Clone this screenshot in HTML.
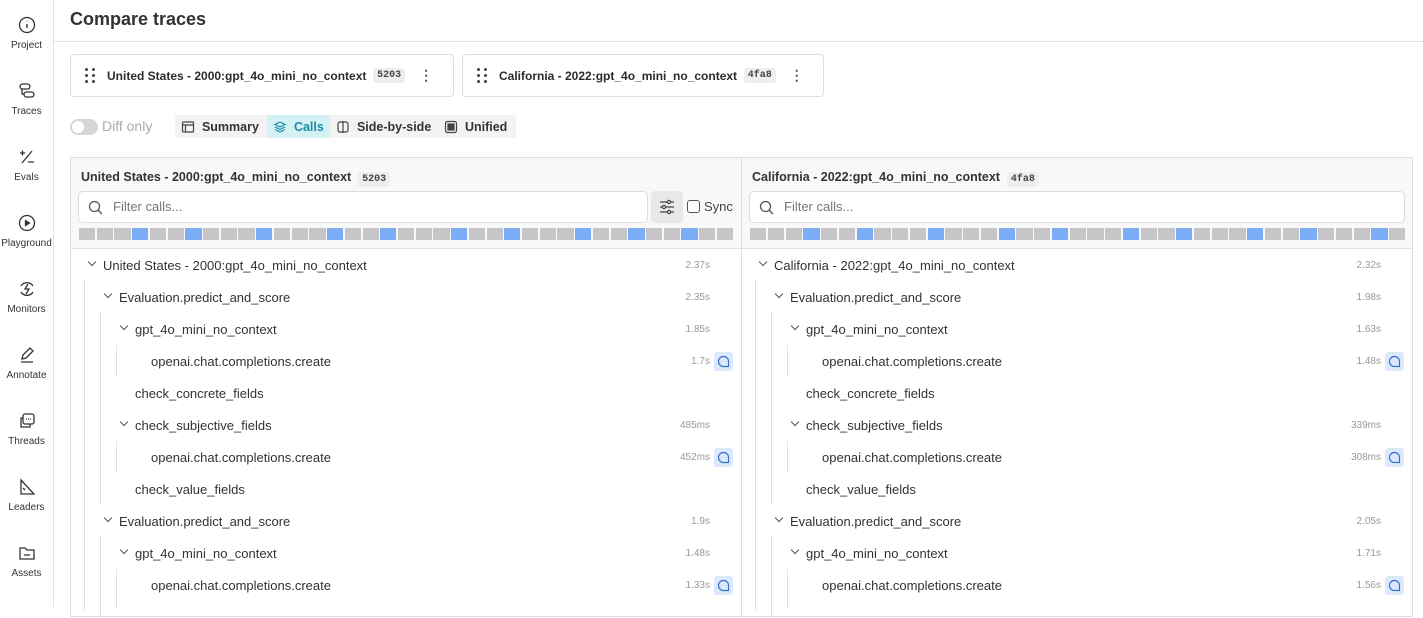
<!DOCTYPE html><html><head><style>
*{box-sizing:border-box;margin:0;padding:0}
body{width:1423px;height:607px;overflow:hidden;background:#fff;font-family:"Liberation Sans",sans-serif;color:#2b2b2b;position:relative}
.a{position:absolute}
.side{left:0;top:0;width:54px;height:607px;border-right:1px solid #e2e2e2}
.ni{position:absolute;left:0;width:53px;text-align:center;font-size:10px;color:#333}
.ni svg{display:block;margin:0 auto 6px}
.badge{display:inline-block;background:#eee;border-radius:3px;font-family:"Liberation Mono",monospace;font-size:10px;font-weight:bold;padding:2px 4px;color:#444}
.card{top:54px;height:43px;border:1px solid #ddd;border-radius:4px;font-size:12px;font-weight:bold;display:flex;align-items:center;padding-left:14px;color:#2b2b2b;white-space:nowrap}
.dots{display:inline-grid;grid-template-columns:3px 3px;gap:3px 4px;margin-right:12px}
.dots i{width:3px;height:3px;background:#444;border-radius:50%}
.tab{top:115px;height:23px;font-size:12.5px;font-weight:bold;display:flex;align-items:center;padding:0 6px;background:#f3f3f3;color:#333;white-space:nowrap}
.row{position:absolute;font-size:13px;color:#333;height:20px;line-height:20px;white-space:nowrap}
.dur{position:absolute;font-size:10px;color:#999;text-align:right;width:60px;height:20px;line-height:20px}
.ic{position:absolute;width:19px;height:19px;background:#dbe9fb;border-radius:3px}
.gl{position:absolute;width:1px;background:#e3e3e3}
.chev{position:absolute;width:6px;height:6px;border-right:1.3px solid #555;border-bottom:1.3px solid #555;transform:rotate(45deg)}
.bar{position:absolute;top:228px;height:12px;display:flex;gap:1.5px}
.bar i{flex:1;background:#c6c6c8}
.bar i.b{background:#7aadf5}
.filter{position:absolute;top:191px;height:32px;border:1px solid #ddd;border-radius:5px;background:#fff;font-size:13px;color:#777;padding-left:34px;line-height:30px}
</style></head><body>
<div class="a side">
 <div class="ni" style="top:16px"><svg width="18" height="18" viewBox="0 0 18 18"><circle cx="9" cy="9" r="7.5" fill="none" stroke="#333" stroke-width="1.3"/><path d="M9 8v4M9 5.6v.4" stroke="#333" stroke-width="1.4"/></svg>Project</div>
 <div class="ni" style="top:82px"><svg width="18" height="18" viewBox="0 0 18 18" fill="none" stroke="#333" stroke-width="1.3"><rect x="2" y="2" width="10" height="5" rx="2.5"/><rect x="6" y="10" width="10" height="5" rx="2.5"/><path d="M4 7v5h2"/></svg>Traces</div>
 <div class="ni" style="top:148px"><svg width="18" height="18" viewBox="0 0 18 18" fill="none" stroke="#333" stroke-width="1.3"><path d="M2 5h5M4.5 2.5v5M14 3L4 15M10 14h6"/></svg>Evals</div>
 <div class="ni" style="top:214px"><svg width="18" height="18" viewBox="0 0 18 18" fill="none" stroke="#333" stroke-width="1.3"><circle cx="9" cy="9" r="7.5"/><path d="M7.5 6.5v5l4-2.5z" fill="#333"/></svg>Playground</div>
 <div class="ni" style="top:280px"><svg width="18" height="18" viewBox="0 0 18 18" fill="none" stroke="#333" stroke-width="1.3"><path d="M3 6a7 7 0 0 1 12 0M15 12a7 7 0 0 1-12 0"/><path d="M10 4l-3 5h4l-3 5"/></svg>Monitors</div>
 <div class="ni" style="top:346px"><svg width="18" height="18" viewBox="0 0 18 18" fill="none" stroke="#333" stroke-width="1.3"><path d="M4 13l1-4 7-7 3 3-7 7zM3 16h12"/></svg>Annotate</div>
 <div class="ni" style="top:412px"><svg width="18" height="18" viewBox="0 0 18 18" fill="none" stroke="#333" stroke-width="1.3"><rect x="5" y="2" width="11" height="10" rx="2"/><path d="M5 6H3v9h9v-3"/><path d="M8 7h1M10 7h1M12 7h1"/></svg>Threads</div>
 <div class="ni" style="top:478px"><svg width="18" height="18" viewBox="0 0 18 18" fill="none" stroke="#333" stroke-width="1.3"><path d="M3 2v14h13z"/><path d="M5 10l2 2"/></svg>Leaders</div>
 <div class="ni" style="top:544px"><svg width="18" height="18" viewBox="0 0 18 18" fill="none" stroke="#333" stroke-width="1.3"><path d="M2 4h5l2 2h7v9H2z"/><path d="M6 11h6"/></svg>Assets</div>
</div>
<div class="a" style="left:70px;top:9px;font-size:18px;font-weight:bold;color:#333">Compare traces</div>
<div class="a" style="left:54px;top:41px;width:1369px;height:1px;background:#e2e2e2"></div>

<div class="a card" style="left:70px;width:384px"><span class="dots"><i></i><i></i><i></i><i></i><i></i><i></i></span>United States - 2000:gpt_4o_mini_no_context&nbsp;&nbsp;<span class="badge">5203</span><span style="margin-left:14px;font-size:14px;color:#555">⋮</span></div>
<div class="a card" style="left:462px;width:362px"><span class="dots"><i></i><i></i><i></i><i></i><i></i><i></i></span>California - 2022:gpt_4o_mini_no_context&nbsp;&nbsp;<span class="badge">4fa8</span><span style="margin-left:14px;font-size:14px;color:#555">⋮</span></div>

<div class="a" style="left:70px;top:119px;width:28px;height:16px;border-radius:8px;background:#d6d6d6"><div style="position:absolute;left:2px;top:2px;width:12px;height:12px;border-radius:50%;background:#fff"></div></div>
<div class="a" style="left:102px;top:118px;font-size:14px;color:#aaa">Diff only</div>
<div class="a tab" style="left:175px;width:92px"><svg width="14" height="14" viewBox="0 0 14 14" fill="none" stroke="#444" stroke-width="1.2"><rect x="1.5" y="2" width="11" height="10" rx="1"/><path d="M1.5 5h11M4.5 5v7"/></svg>&nbsp;&nbsp;Summary</div>
<div class="a tab" style="left:267px;width:63px;background:#d4f2f6;color:#1a8ea0"><svg width="14" height="14" viewBox="0 0 14 14" fill="none" stroke="#1a8ea0" stroke-width="1.2"><path d="M7 2l5 2.5-5 2.5-5-2.5zM2 7l5 2.5L12 7M2 9.5L7 12l5-2.5"/></svg>&nbsp;&nbsp;Calls</div>
<div class="a tab" style="left:330px;width:108px"><svg width="14" height="14" viewBox="0 0 14 14" fill="none" stroke="#444" stroke-width="1.2"><rect x="2" y="2" width="10" height="10" rx="2"/><path d="M7 1v12"/></svg>&nbsp;&nbsp;Side-by-side</div>
<div class="a tab" style="left:438px;width:78px"><svg width="14" height="14" viewBox="0 0 14 14" fill="none" stroke="#444" stroke-width="1.2"><rect x="1.5" y="1.5" width="11" height="11" rx="2"/><rect x="4" y="4" width="6" height="6" fill="#444"/></svg>&nbsp;&nbsp;Unified</div>

<div class="a" style="left:70px;top:157px;width:1343px;height:460px;border:1px solid #ddd"></div>
<div class="a" style="left:71px;top:158px;width:1341px;height:91px;background:#f8f8f8;border-bottom:1px solid #e2e2e2"></div>
<div class="a" style="left:741px;top:158px;width:1px;height:460px;background:#ddd"></div>

<div class="a" style="left:81px;top:170px;font-size:12.5px;font-weight:bold;color:#333;white-space:nowrap">United States - 2000:gpt_4o_mini_no_context&nbsp;&nbsp;<span class="badge">5203</span></div>
<div class="a" style="left:752px;top:170px;font-size:12.5px;font-weight:bold;color:#333;white-space:nowrap">California - 2022:gpt_4o_mini_no_context&nbsp;&nbsp;<span class="badge">4fa8</span></div>

<div class="filter" style="left:78px;width:570px">Filter calls...</div>
<svg class="a" style="left:88px;top:200px" width="15" height="15" viewBox="0 0 15 15" fill="none" stroke="#555" stroke-width="1.3"><circle cx="6.5" cy="6.5" r="5"/><path d="M10 10l4 4"/></svg>
<div class="a" style="left:651px;top:191px;width:32px;height:32px;background:#e8e8e8;border-radius:4px"></div>
<svg class="a" style="left:658px;top:199px" width="18" height="16" viewBox="0 0 18 16" fill="none" stroke="#444" stroke-width="1.2"><path d="M2 3h14M2 8h14M2 13h14"/><circle cx="11" cy="3" r="1.6" fill="#e8e8e8"/><circle cx="6" cy="8" r="1.6" fill="#e8e8e8"/><circle cx="11" cy="13" r="1.6" fill="#e8e8e8"/></svg>
<div class="a" style="left:687px;top:200px;width:13px;height:13px;border:1px solid #555;border-radius:3px;background:#fff"></div>
<div class="a" style="left:704px;top:199px;font-size:13px;color:#444">Sync</div>

<div class="filter" style="left:749px;width:656px">Filter calls...</div>
<svg class="a" style="left:759px;top:200px" width="15" height="15" viewBox="0 0 15 15" fill="none" stroke="#555" stroke-width="1.3"><circle cx="6.5" cy="6.5" r="5"/><path d="M10 10l4 4"/></svg>

<div class="bar" style="left:79px;width:654px"><i></i><i></i><i></i><i class="b"></i><i></i><i></i><i class="b"></i><i></i><i></i><i></i><i class="b"></i><i></i><i></i><i></i><i class="b"></i><i></i><i></i><i class="b"></i><i></i><i></i><i></i><i class="b"></i><i></i><i></i><i class="b"></i><i></i><i></i><i></i><i class="b"></i><i></i><i></i><i class="b"></i><i></i><i></i><i class="b"></i><i></i><i></i></div>
<div class="bar" style="left:750px;width:655px"><i></i><i></i><i></i><i class="b"></i><i></i><i></i><i class="b"></i><i></i><i></i><i></i><i class="b"></i><i></i><i></i><i></i><i class="b"></i><i></i><i></i><i class="b"></i><i></i><i></i><i></i><i class="b"></i><i></i><i></i><i class="b"></i><i></i><i></i><i></i><i class="b"></i><i></i><i></i><i class="b"></i><i></i><i></i><i></i><i class="b"></i><i></i></div>

<div class="gl" style="left:84px;top:280px;height:330px"></div>
<div class="gl" style="left:100px;top:312px;height:192px"></div>
<div class="gl" style="left:116px;top:345px;height:32px"></div>
<div class="gl" style="left:116px;top:441px;height:32px"></div>
<div class="gl" style="left:100px;top:536px;height:80px"></div>
<div class="gl" style="left:116px;top:569px;height:40px"></div>
<div id="L"></div>
<div id="R"></div>
<script>
function build(off,durs){
 var rows=[[0,"United States - 2000:gpt_4o_mini_no_context",1,0],[1,"Evaluation.predict_and_score",1,0],[2,"gpt_4o_mini_no_context",1,0],[3,"openai.chat.completions.create",0,1],[2,"check_concrete_fields",0,0],[2,"check_subjective_fields",1,0],[3,"openai.chat.completions.create",0,1],[2,"check_value_fields",0,0],[1,"Evaluation.predict_and_score",1,0],[2,"gpt_4o_mini_no_context",1,0],[3,"openai.chat.completions.create",0,1]];
 if(off>0)rows[0][1]="California - 2022:gpt_4o_mini_no_context";
 var h="";
 rows.forEach(function(r,i){
  var y=265+32*i, x=off+103+16*r[0];
  if(r[2])h+='<div class="chev" style="left:'+(x-14)+'px;top:'+(y-6)+'px"></div>';
  h+='<div class="row" style="left:'+x+'px;top:'+(y-9)+'px">'+r[1]+'</div>';
  if(durs[i])h+='<div class="dur" style="left:'+(off+650)+'px;top:'+(y-9)+'px">'+durs[i]+'</div>';
  if(r[3])h+='<div class="ic" style="left:'+(off+714)+'px;top:'+(y-9)+'px"><svg width="19" height="19" viewBox="0 0 19 19" fill="none" stroke="#3a6fd0" stroke-width="1.2"><path d="M14.5 14.5V9.5a5 5 0 1 0-5 5z"/><path d="M7 9.5h.1M9.5 9.5h.1M12 9.5h.1" stroke-width="1.4"/></svg></div>';
 });
 return h;
}
document.getElementById("L").innerHTML=build(0,["2.37s","2.35s","1.85s","1.7s","","485ms","452ms","","1.9s","1.48s","1.33s"]);
document.getElementById("R").innerHTML=build(671,["2.32s","1.98s","1.63s","1.48s","","339ms","308ms","","2.05s","1.71s","1.56s"])+
'<div class="gl" style="left:755px;top:280px;height:330px"></div><div class="gl" style="left:771px;top:312px;height:192px"></div><div class="gl" style="left:787px;top:345px;height:32px"></div><div class="gl" style="left:787px;top:441px;height:32px"></div><div class="gl" style="left:771px;top:536px;height:80px"></div><div class="gl" style="left:787px;top:569px;height:40px"></div>';
</script>
</body></html>
